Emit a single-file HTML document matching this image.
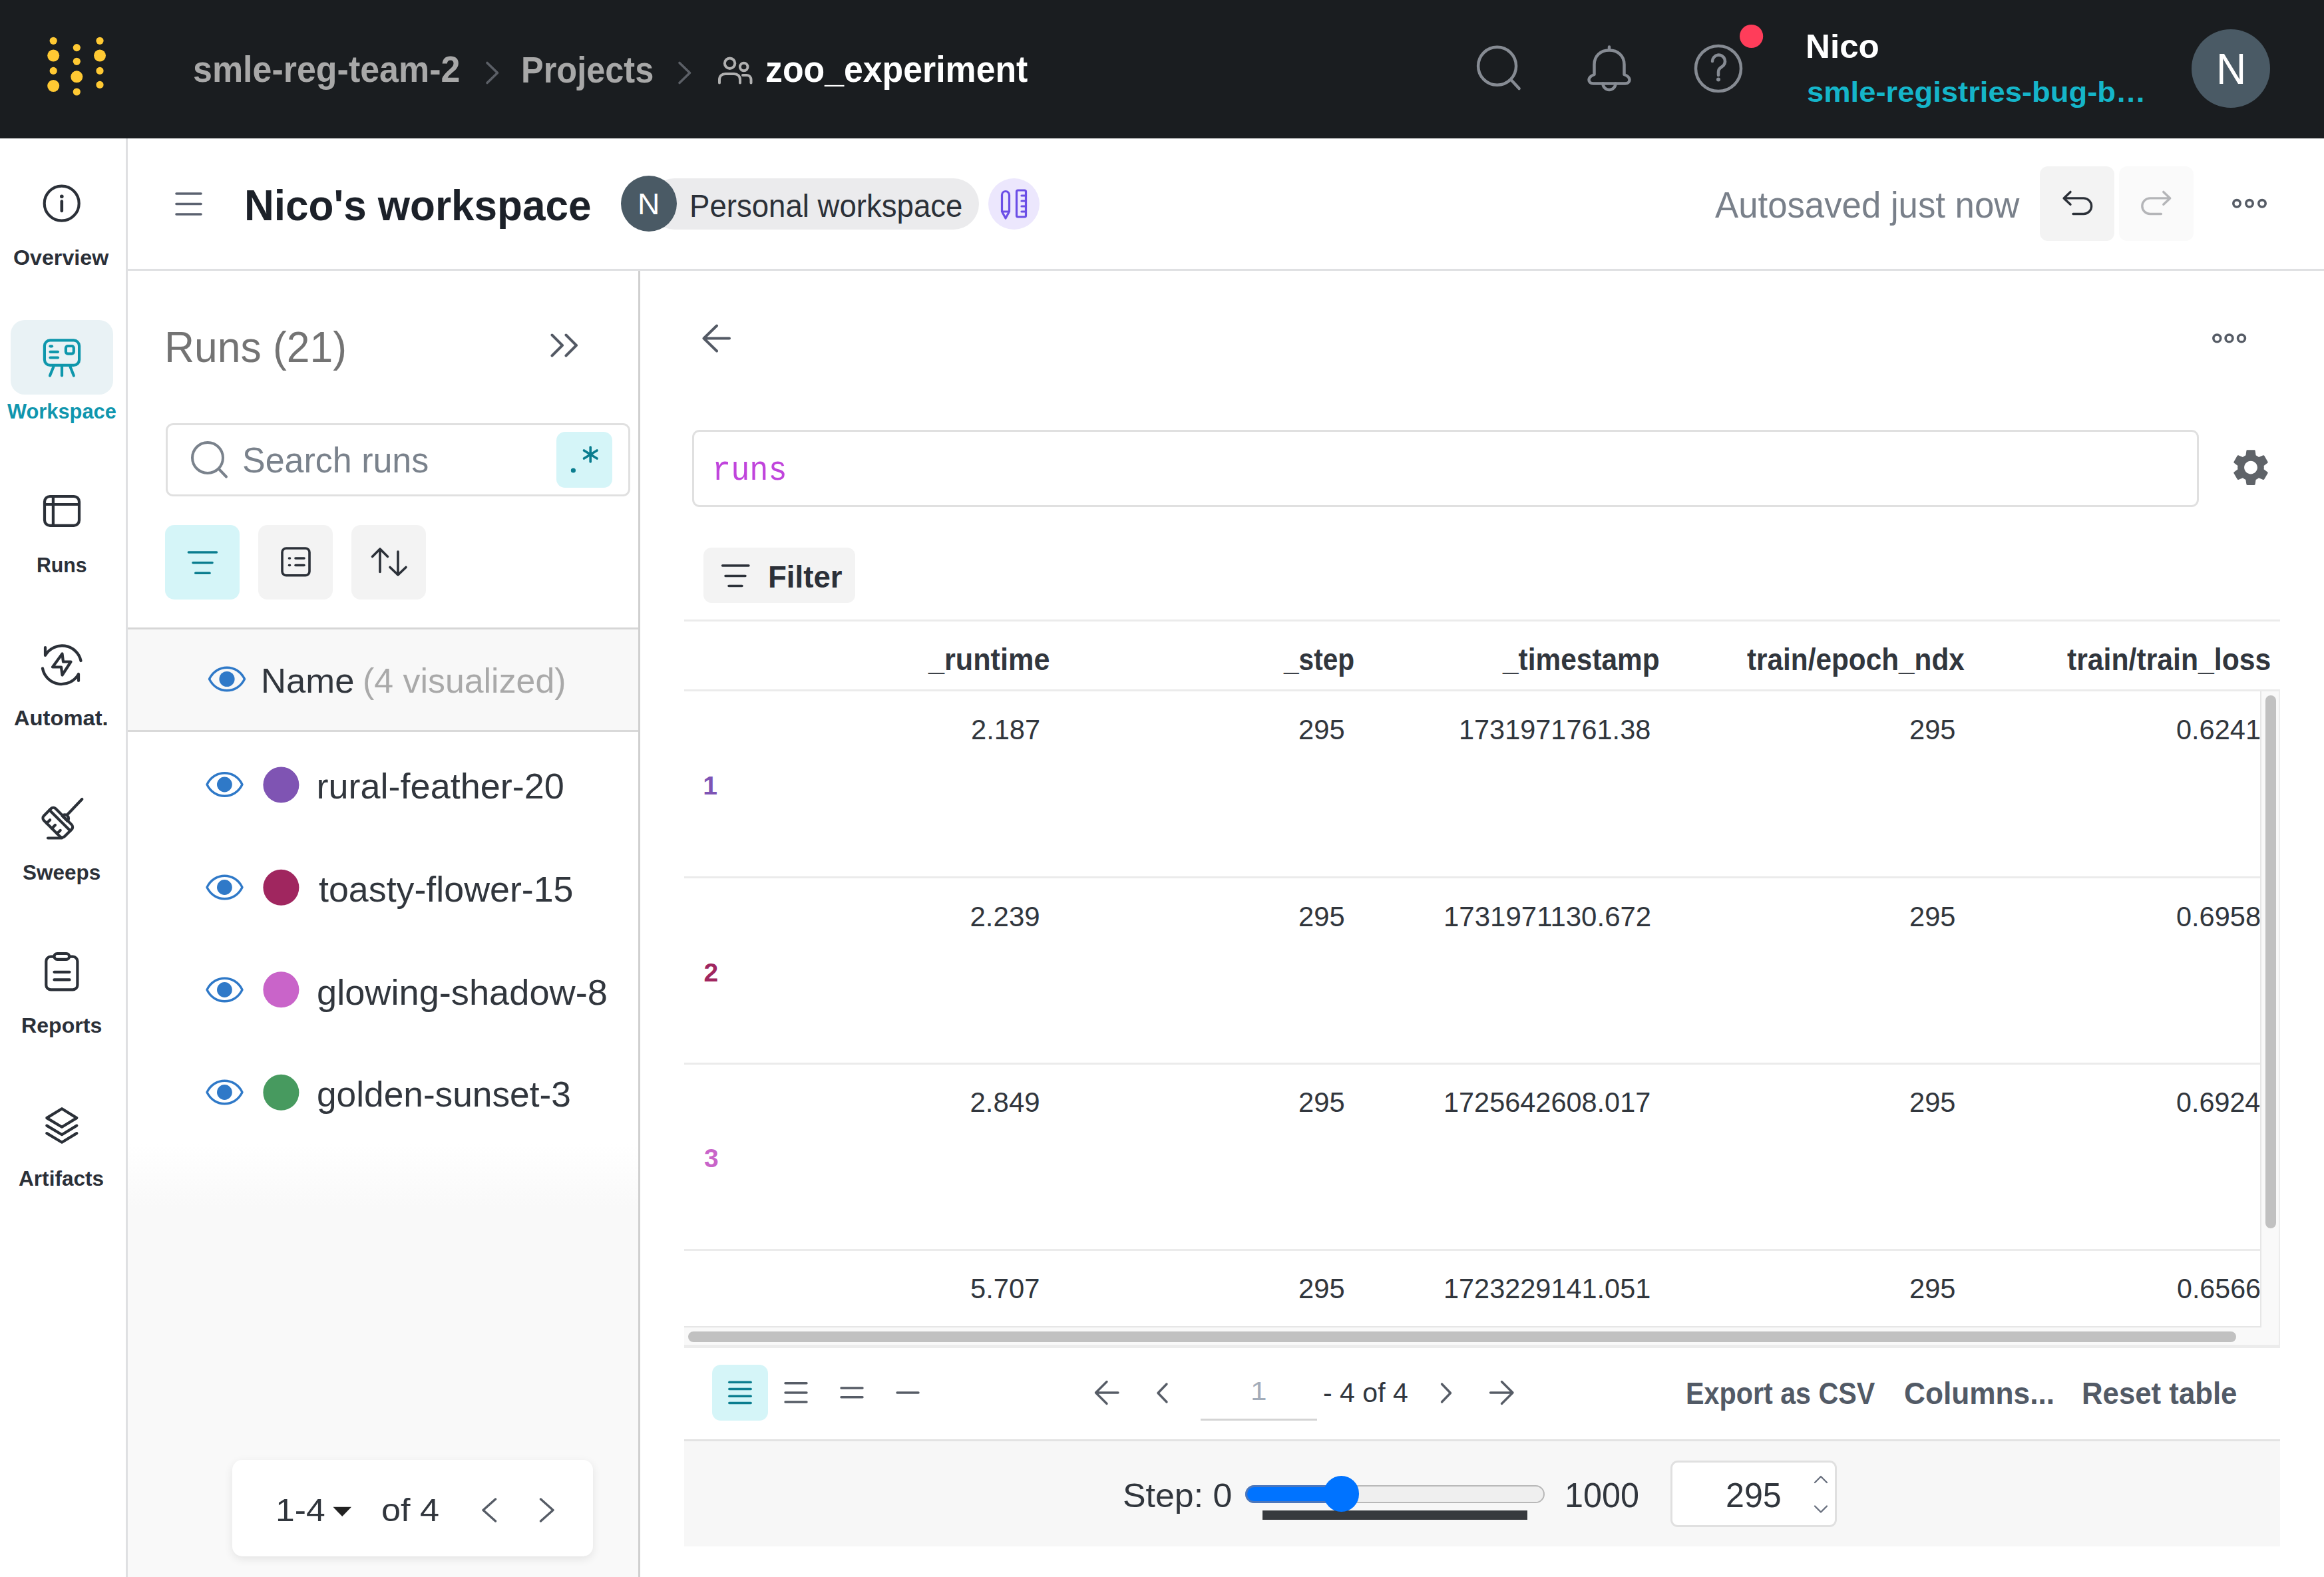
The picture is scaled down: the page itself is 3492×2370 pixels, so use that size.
<!DOCTYPE html>
<html><head><meta charset="utf-8"><title>Nico's workspace</title>
<style>
html,body{margin:0;padding:0;}
body{width:3492px;height:2370px;position:relative;overflow:hidden;background:#fff;font-family:"Liberation Sans",sans-serif;}
.b{position:absolute;box-sizing:border-box;}
.t{position:absolute;white-space:nowrap;transform-origin:0 0;}
svg{position:absolute;overflow:visible;}
</style></head><body>
<!-- top bar -->
<div class="b" style="left:0;top:0;width:3492px;height:208px;background:#1a1d20"></div>
<!-- nav sidebar -->
<div class="b" style="left:189px;top:208px;width:3px;height:2162px;background:#dfe0e2"></div>
<div class="b" style="left:16px;top:481px;width:153.5px;height:112px;border-radius:21px;background:#e9f2f5"></div>
<!-- header -->
<div class="b" style="left:192px;top:404px;width:3300px;height:3px;background:#dfe0e2"></div>
<div class="b" style="left:975px;top:268px;width:496px;height:77px;border-radius:38.5px;background:#ebebed"></div>
<div class="b" style="left:933px;top:263.5px;width:84px;height:84px;border-radius:50%;background:#4a5a65"></div>
<div class="b" style="left:1485px;top:268px;width:77px;height:77px;border-radius:50%;background:#ece7fd"></div>
<div class="b" style="left:3065px;top:250px;width:111.5px;height:112px;border-radius:12px;background:#f3f3f3"></div>
<div class="b" style="left:3184px;top:250px;width:112px;height:112px;border-radius:12px;background:#fafafa"></div>
<!-- runs panel -->
<div class="b" style="left:959px;top:407px;width:3px;height:1963px;background:#d0d0d0"></div>
<div class="b" style="left:248.5px;top:636px;width:698.5px;height:109.5px;border:3px solid #e0e0e0;border-radius:11px;background:#fff"></div>
<div class="b" style="left:836px;top:649px;width:83.5px;height:83.5px;border-radius:13px;background:#d5f5f8"></div>
<div class="b" style="left:248px;top:789px;width:112px;height:112px;border-radius:14px;background:#d5f5f8"></div>
<div class="b" style="left:388px;top:789px;width:112px;height:112px;border-radius:14px;background:#f3f3f3"></div>
<div class="b" style="left:528px;top:789px;width:112px;height:112px;border-radius:14px;background:#f3f3f3"></div>
<div class="b" style="left:192px;top:943px;width:767px;height:3px;background:#d6d6d6"></div>
<div class="b" style="left:192px;top:946px;width:767px;height:151px;background:#f8f8f8"></div>
<div class="b" style="left:192px;top:1097px;width:767px;height:3px;background:#d9d9d9"></div>
<div class="b" style="left:192px;top:1720px;width:767px;height:650px;background:linear-gradient(#fff 0px,#f9f9f9 95px,#f9f9f9 650px)"></div>
<div class="b" style="left:349px;top:2193.5px;width:542px;height:145.5px;border-radius:15px;background:#fff;box-shadow:0 4px 14px rgba(0,0,0,0.09)"></div>
<!-- main panel -->
<div class="b" style="left:1039.5px;top:645.5px;width:2264px;height:116.5px;border:3px solid #e0e0e0;border-radius:11px;background:#fff"></div>
<div class="b" style="left:1056.5px;top:822.5px;width:228.5px;height:83px;border-radius:12px;background:#f3f3f3"></div>
<div class="b" style="left:1028px;top:931px;width:2398px;height:3px;background:#ebebeb"></div>
<div class="b" style="left:1028px;top:1036px;width:2398px;height:3px;background:#ebebeb"></div>
<div class="b" style="left:1028px;top:1316.5px;width:2369px;height:3px;background:#ebebeb"></div>
<div class="b" style="left:1028px;top:1596.5px;width:2369px;height:3px;background:#ebebeb"></div>
<div class="b" style="left:1028px;top:1876.5px;width:2369px;height:3px;background:#ebebeb"></div>
<div class="b" style="left:3396px;top:1039px;width:30px;height:987px;background:#f9f9f9;border-right:2px solid #ececec"></div><div class="b" style="left:3396px;top:1039px;width:2px;height:956px;background:#e6e6e6"></div>
<div class="b" style="left:3404px;top:1045px;width:16px;height:801px;border-radius:8px;background:#c1c1c1"></div>
<div class="b" style="left:1028px;top:1993px;width:2370px;height:2px;background:#e6e6e6"></div>
<div class="b" style="left:1028px;top:1995px;width:2398px;height:31px;background:#f9f9f9;border-bottom:5px solid #ececec;border-right:2px solid #ececec"></div>
<div class="b" style="left:1034px;top:2000.5px;width:2325.5px;height:16px;border-radius:8px;background:#c1c1c1"></div>
<div class="b" style="left:1028px;top:2162.5px;width:2398px;height:3px;background:#e3e3e3"></div>
<div class="b" style="left:1028px;top:2165.5px;width:2398px;height:158px;background:#f7f7f7"></div>
<div class="b" style="left:1070px;top:2051px;width:83.6px;height:83.8px;border-radius:13px;background:#d5f5f8"></div>
<div class="b" style="left:1804px;top:2131.5px;width:175px;height:3px;background:#d4d4d4"></div>
<div class="b" style="left:1871px;top:2232px;width:449.5px;height:27px;border-radius:13.5px;background:#efefef;border:2px solid #b8b8b8"></div>
<div class="b" style="left:1871px;top:2232px;width:160px;height:27px;border-radius:13.5px;background:#0073ff;border:3px solid #4b77bd"></div>
<div class="b" style="left:1897px;top:2270px;width:398px;height:14px;background:#373a3e"></div>
<div class="b" style="left:1988.5px;top:2218.2px;width:53.6px;height:53.6px;border-radius:50%;background:#0073ff"></div>
<div class="b" style="left:2510px;top:2195px;width:250px;height:100px;border:3px solid #e0e0e0;border-radius:11px;background:#fff"></div>
<!-- icons -->
<svg width="3492" height="2370" style="left:0;top:0" fill="none" stroke-linecap="round" stroke-linejoin="round">
 <!-- logo -->
 <g fill="#ffc933">
  <circle cx="80.2" cy="61.3" r="5.6"/><circle cx="80.2" cy="83.6" r="9"/><circle cx="80.2" cy="106.4" r="5.6"/><circle cx="80.2" cy="129.1" r="9"/>
  <circle cx="115.3" cy="71.6" r="5.6"/><circle cx="115.3" cy="92.3" r="5.6"/><circle cx="115.3" cy="115.3" r="9"/><circle cx="115.3" cy="138" r="5.6"/>
  <circle cx="150" cy="61.3" r="5.6"/><circle cx="150" cy="83.6" r="9"/><circle cx="150" cy="106.4" r="5.6"/><circle cx="150" cy="127.4" r="5.6"/>
 </g>
 <!-- breadcrumb chevrons -->
 <g stroke="#5b5f66" stroke-width="3.6">
  <polyline points="732,94.5 747.5,109.5 732,124.5"/>
  <polyline points="1021,94.5 1036.5,109.5 1021,124.5"/>
 </g>
 <!-- people -->
 <g stroke="#b0b0b0" stroke-width="4">
  <circle cx="1096.6" cy="95.2" r="7.7"/>
  <path d="M1081,124.5 V120 C1081,114 1085,111 1090,111 H1103 C1108,111 1112,114 1112,120 V124.5"/>
  <circle cx="1117.7" cy="100.5" r="5.8"/>
  <path d="M1116,113 H1122 C1126,113 1128.5,116 1128.5,120 V124.5"/>
 </g>
 <!-- top right icons -->
 <g stroke="#868b93" stroke-width="4.5">
  <circle cx="2249.6" cy="99.3" r="28.5"/>
  <line x1="2271" y1="120.5" x2="2282.6" y2="133"/>
  <path d="M2395.5,112 V97 C2395.5,84 2405,75.5 2418,75.5 C2431,75.5 2440.5,84 2440.5,97 V112 C2446,114 2448.5,117 2448.5,120 C2448.5,123 2446,125.5 2442,125.5 H2394 C2390,125.5 2387.5,123 2387.5,120 C2387.5,117 2390,114 2395.5,112 Z"/>
  <line x1="2418" y1="70.5" x2="2418" y2="74"/>
  <path d="M2408.5,125.5 a9.5,9.5 0 0 0 19,0"/>
  <circle cx="2582" cy="103" r="34"/>
  <path d="M2573,92 a9.5,9.5 0 1 1 14,8.5 c-3,1.8 -5,3.5 -5,7.5 v5"/>
 </g>
 <circle cx="2582" cy="119.5" r="3" fill="#868b93"/>
 <circle cx="2631.6" cy="54.5" r="17.6" fill="#ff3d5a"/>
 <circle cx="3352" cy="103" r="59" fill="#4a5a65"/>
 <!-- nav icons -->
 <g stroke="#2b3038" stroke-width="4.2">
  <circle cx="92.7" cy="305.7" r="26"/>
  <line x1="92.8" y1="302.5" x2="92.8" y2="317" stroke-width="4.6"/>
  <rect x="67" y="746" width="52" height="43.8" rx="8"/>
  <line x1="67" y1="758" x2="119" y2="758"/>
  <line x1="79.9" y1="746" x2="79.9" y2="789.8"/>
  <path d="M68,973 V985 A29,29 0 0 1 121.5,993"/>
  <path d="M64,1004.5 A29,29 0 0 0 118,1013 V1023"/>
  <path d="M93.5,982.5 L95,994.5 H106.5 L93.5,1014.5 L92,1002.5 H79 Z"/>
  <path d="M123.3,1201 L100.5,1225"/>
  <g transform="rotate(45 87.5 1235.5)"><rect x="65.5" y="1224" width="44" height="25" rx="5"/><line x1="65.5" y1="1232" x2="109.5" y2="1232"/><line x1="76.5" y1="1249" x2="76.5" y2="1242"/><line x1="87.5" y1="1249" x2="87.5" y2="1242"/><line x1="98.5" y1="1249" x2="98.5" y2="1242"/></g>
  <path d="M93.5,1225.9 A5.66,5.66 0 0 1 101.5,1233.9 Z"/>
  <line x1="72" y1="1259.5" x2="93" y2="1259.5"/>
  <rect x="69.3" y="1437.6" width="47.1" height="49.8" rx="7"/>
  <rect x="81.5" y="1433" width="22.6" height="8.8" rx="4.4" fill="#fff"/>
  <line x1="81.5" y1="1460.8" x2="104.5" y2="1460.8"/>
  <line x1="81.5" y1="1472.4" x2="104.5" y2="1472.4"/>
  <path d="M93,1666.2 L115.3,1680.1 L93,1693.7 L70.3,1680.1 Z"/>
  <path d="M70.3,1691.6 L93,1705.2 L115.3,1691.6"/>
  <path d="M70.3,1703.1 L93,1716.7 L115.3,1703.1"/>
 </g>
 <circle cx="92.8" cy="295.3" r="2.8" fill="#2b3038"/>
 <g stroke="#0e97ac" stroke-width="4.2">
  <rect x="66.9" y="511.4" width="52.2" height="37.5" rx="8.4"/>
  <line x1="75.5" y1="520.3" x2="78" y2="520.3"/>
  <line x1="75.5" y1="528.8" x2="87" y2="528.8"/>
  <line x1="75.5" y1="537.5" x2="87" y2="537.5"/>
  <rect x="98.9" y="520" width="11.9" height="11.6" rx="3"/>
  <line x1="80.5" y1="551" x2="75" y2="564.5"/>
  <line x1="93" y1="551" x2="93" y2="564.5"/>
  <line x1="105.5" y1="551" x2="110.8" y2="564.5"/>
 </g>
 <!-- header icons -->
 <g stroke="#5b6270" stroke-width="3.6">
  <line x1="265" y1="291" x2="302" y2="291"/>
  <line x1="265" y1="306.5" x2="302" y2="306.5"/>
  <line x1="265" y1="322" x2="302" y2="322"/>
 </g>
 <g stroke="#6b4ee6" stroke-width="3.2">
  <path d="M1505.5,318 V293 a5.5,5.5 0 0 1 11,0 V318 L1511,328 Z M1505.5,318 H1516.5"/>
  <rect x="1527.5" y="286" width="14" height="40" rx="2"/>
  <line x1="1535" y1="294" x2="1541" y2="294"/><line x1="1535" y1="302" x2="1541" y2="302"/><line x1="1535" y1="310" x2="1541" y2="310"/><line x1="1535" y1="318" x2="1541" y2="318"/>
 </g>
 <path d="M3111,288.4 L3101.1,297.9 L3111,307.3 M3101.1,297.9 H3130.8 a11.8,11.8 0 0 1 0,23.6 H3115" stroke="#2b3038" stroke-width="3.4"/>
 <path d="M3250.8,288.4 L3260.7,297.9 L3250.8,307.3 M3260.7,297.9 H3230.6 a11.8,11.8 0 0 0 0,23.6 H3247.4" stroke="#b4b5b8" stroke-width="3.4"/>
 <g stroke="#565c66" stroke-width="3.6">
  <circle cx="3361" cy="305.8" r="5.2"/><circle cx="3380" cy="305.8" r="5.2"/><circle cx="3399" cy="305.8" r="5.2"/>
 </g>
 <!-- runs panel icons -->
 <g stroke="#535964" stroke-width="4">
  <polyline points="829.5,503.5 845,519 829.5,534.5"/>
  <polyline points="850.5,503.5 866,519 850.5,534.5"/>
 </g>
 <g stroke="#7a828c" stroke-width="4">
  <circle cx="312" cy="688" r="23"/>
  <line x1="329" y1="705" x2="340" y2="716.5"/>
 </g>
 <circle cx="861.4" cy="707" r="3.6" fill="#0a7d8f"/>
 <g stroke="#0a7d8f" stroke-width="3.6">
  <line x1="887.2" y1="672" x2="887.2" y2="694"/>
  <line x1="877.5" y1="677" x2="897" y2="689"/>
  <line x1="897" y1="677" x2="877.5" y2="689"/>
 </g>
 <g stroke="#0a7d8f" stroke-width="3.6">
  <line x1="283.4" y1="830" x2="325.4" y2="830"/>
  <line x1="290" y1="845.8" x2="319" y2="845.8"/>
  <line x1="293.8" y1="861.3" x2="315" y2="861.3"/>
 </g>
 <g stroke="#2b3038" stroke-width="3.6">
  <rect x="424" y="824" width="41" height="40.7" rx="6"/>
  <line x1="434.5" y1="839" x2="435.5" y2="839"/><line x1="444" y1="839" x2="457" y2="839"/>
  <line x1="434.5" y1="849.5" x2="435.5" y2="849.5"/><line x1="444" y1="849.5" x2="457" y2="849.5"/>
  <path d="M571,859.5 V825 M559.5,836.5 L571,825 L582.5,836.5"/>
  <path d="M598,829 V864 M586,852.5 L598,864 L610,852.5"/>
 </g>
 <g stroke="#2f79c8" stroke-width="3.4">
  <path d="M314.5,1020.5 C325.5,997.5 356.5,997.5 367.5,1020.5 C356.5,1043.5 325.5,1043.5 314.5,1020.5 Z"/>
  <path d="M311,1179 C322,1156 353,1156 364,1179 C353,1202 322,1202 311,1179 Z"/>
  <path d="M311,1333.5 C322,1310.5 353,1310.5 364,1333.5 C353,1356.5 322,1356.5 311,1333.5 Z"/>
  <path d="M311,1487.5 C322,1464.5 353,1464.5 364,1487.5 C353,1510.5 322,1510.5 311,1487.5 Z"/>
  <path d="M311,1641.5 C322,1618.5 353,1618.5 364,1641.5 C353,1664.5 322,1664.5 311,1641.5 Z"/>
 </g>
 <g fill="#2f79c8">
  <circle cx="341" cy="1020.5" r="11.6"/>
  <circle cx="337.4" cy="1179" r="11.4"/><circle cx="337.4" cy="1333.5" r="11.4"/><circle cx="337.4" cy="1487.5" r="11.4"/><circle cx="337.4" cy="1641.5" r="11.4"/>
 </g>
 <circle cx="422.4" cy="1179.5" r="27" fill="#7f54b3"/>
 <circle cx="422.4" cy="1333.8" r="27" fill="#a0265f"/>
 <circle cx="422.4" cy="1487.3" r="27" fill="#c964c9"/>
 <circle cx="422.4" cy="1641.8" r="27" fill="#479a5f"/>
 <path d="M500.5,2264.8 H528 L514.2,2279 Z" fill="#222" />
 <g stroke="#565c66" stroke-width="3.4">
  <polyline points="744.5,2253 726,2269.5 744.5,2286"/>
  <polyline points="812.5,2253 831,2269.5 812.5,2286"/>
 </g>
 <!-- main panel icons -->
 <g stroke="#535964" stroke-width="4">
  <path d="M1077,489.5 L1057.5,508.5 L1077,527.5 M1057.5,508.5 H1096"/>
 </g>
 <g stroke="#565c66" stroke-width="3.6">
  <circle cx="3331.3" cy="508.4" r="5.4"/><circle cx="3349.5" cy="508.4" r="5.4"/><circle cx="3368" cy="508.4" r="5.4"/>
 </g>
 <g stroke="#2b3038" stroke-width="3.4">
  <line x1="1085.5" y1="850" x2="1125" y2="850"/>
  <line x1="1090" y1="865.5" x2="1120" y2="865.5"/>
  <line x1="1095" y1="880.5" x2="1115" y2="880.5"/>
 </g>
 <!-- density icons -->
 <g stroke="#0a7d8f" stroke-width="3.4">
  <line x1="1095.8" y1="2077.3" x2="1128.2" y2="2077.3"/><line x1="1095.8" y1="2087.5" x2="1128.2" y2="2087.5"/><line x1="1095.8" y1="2098.2" x2="1128.2" y2="2098.2"/><line x1="1095.8" y1="2108.5" x2="1128.2" y2="2108.5"/>
 </g>
 <g stroke="#565c66" stroke-width="3.4">
  <line x1="1180" y1="2078.8" x2="1212" y2="2078.8"/><line x1="1180" y1="2093" x2="1212" y2="2093"/><line x1="1180" y1="2107" x2="1212" y2="2107"/>
  <line x1="1264" y1="2086" x2="1296" y2="2086"/><line x1="1264" y1="2099.7" x2="1296" y2="2099.7"/>
  <line x1="1348" y1="2093" x2="1380" y2="2093"/>
  <path d="M1663,2076.5 L1646.5,2093 L1663,2109.5 M1646.5,2093 H1680"/>
  <polyline points="1753,2080 1740,2093.5 1753,2107"/>
  <polyline points="2166.5,2080 2179.5,2093.5 2166.5,2107"/>
  <path d="M2256.5,2076.5 L2273,2093 L2256.5,2109.5 M2273,2093 H2239.5"/>

 </g>
 <g stroke="#6b7280" stroke-width="2.4">
  <polyline points="2727,2228 2736,2219 2745,2228"/>
  <polyline points="2727,2263.5 2736,2272.5 2745,2263.5"/>
 </g>
 <!-- gear -->
 <path fill="#5f6368" transform="translate(3349,669.6) scale(2.75)" d="M19.14,12.94c0.04-0.3,0.06-0.61,0.06-0.94c0-0.32-0.02-0.64-0.07-0.94l2.03-1.58c0.18-0.14,0.23-0.41,0.12-0.61 l-1.92-3.32c-0.12-0.22-0.37-0.29-0.59-0.22l-2.39,0.96c-0.5-0.38-1.03-0.7-1.62-0.94L14.4,2.81c-0.04-0.24-0.24-0.41-0.48-0.41 h-3.84c-0.24,0-0.43,0.17-0.47,0.41L9.25,5.35C8.66,5.59,8.12,5.92,7.63,6.29L5.24,5.33c-0.22-0.08-0.47,0-0.59,0.22L2.74,8.87 C2.62,9.08,2.66,9.34,2.86,9.48l2.03,1.58C4.84,11.36,4.8,11.69,4.8,12s0.02,0.64,0.07,0.94l-2.03,1.58 c-0.18,0.14-0.23,0.41-0.12,0.61l1.92,3.32c0.12,0.22,0.37,0.29,0.59,0.22l2.39-0.96c0.5,0.38,1.03,0.7,1.62,0.94l0.36,2.54 c0.05,0.24,0.24,0.41,0.48,0.41h3.84c0.24,0,0.44-0.17,0.47-0.41l0.36-2.54c0.59-0.24,1.13-0.56,1.62-0.94l2.39,0.96 c0.22,0.08,0.47,0,0.59-0.22l1.92-3.32c0.12-0.22,0.07-0.47-0.12-0.61L19.14,12.94z M12,15.6c-1.98,0-3.6-1.62-3.6-3.6 s1.62-3.6,3.6-3.6s3.6,1.62,3.6,3.6S13.98,15.6,12,15.6z"/>
</svg>

<div class="t" style="left:289.9px;top:77.4px;font-size:55px;line-height:55px;font-weight:bold;color:#a8a8a8;font-family:'Liberation Sans';transform:scaleX(0.9448);">smle-reg-team-2</div>
<div class="t" style="left:782.8px;top:77.9px;font-size:55px;line-height:55px;font-weight:bold;color:#a8a8a8;font-family:'Liberation Sans';transform:scaleX(0.9178);">Projects</div>
<div class="t" style="left:1150.4px;top:76.9px;font-size:55px;line-height:55px;font-weight:bold;color:#ffffff;font-family:'Liberation Sans';transform:scaleX(0.9418);">zoo_experiment</div>
<div class="t" style="left:2712.8px;top:45.2px;font-size:50px;line-height:50px;font-weight:bold;color:#ffffff;font-family:'Liberation Sans';transform:scaleX(1.0233);">Nico</div>
<div class="t" style="left:2714.6px;top:117.2px;font-size:43px;line-height:43px;font-weight:bold;color:#15b5c9;font-family:'Liberation Sans';transform:scaleX(1.0554);">smle-registries-bug-b…</div>
<div class="t" style="left:3330.1px;top:72.4px;font-size:64.5px;line-height:64.5px;font-weight:normal;color:#ffffff;font-family:'Liberation Sans';transform:scaleX(0.9702);">N</div>
<div class="t" style="left:367.1px;top:275.5px;font-size:65.5px;line-height:65.5px;font-weight:bold;color:#1c2129;font-family:'Liberation Sans';transform:scaleX(0.9468);">Nico's workspace</div>
<div class="t" style="left:958.4px;top:283.9px;font-size:45px;line-height:45px;font-weight:normal;color:#ffffff;font-family:'Liberation Sans';transform:scaleX(1.0272);">N</div>
<div class="t" style="left:1036.4px;top:284.9px;font-size:49px;line-height:49px;font-weight:normal;color:#2b3038;font-family:'Liberation Sans';transform:scaleX(0.9302);">Personal workspace</div>
<div class="t" style="left:2577.0px;top:279.6px;font-size:56px;line-height:56px;font-weight:normal;color:#79808a;font-family:'Liberation Sans';transform:scaleX(0.9418);">Autosaved just now</div>
<div class="t" style="left:20.3px;top:370.8px;font-size:32px;line-height:32px;font-weight:bold;color:#2b3038;font-family:'Liberation Sans';transform:scaleX(1.0062);">Overview</div>
<div class="t" style="left:10.5px;top:601.9px;font-size:32px;line-height:32px;font-weight:bold;color:#1096ae;font-family:'Liberation Sans';transform:scaleX(0.9630);">Workspace</div>
<div class="t" style="left:54.6px;top:832.6px;font-size:32px;line-height:32px;font-weight:bold;color:#2b3038;font-family:'Liberation Sans';transform:scaleX(0.9452);">Runs</div>
<div class="t" style="left:21.3px;top:1063.4px;font-size:32px;line-height:32px;font-weight:bold;color:#2b3038;font-family:'Liberation Sans';transform:scaleX(1.0215);">Automat.</div>
<div class="t" style="left:34.1px;top:1294.6px;font-size:32px;line-height:32px;font-weight:bold;color:#2b3038;font-family:'Liberation Sans';transform:scaleX(0.9832);">Sweeps</div>
<div class="t" style="left:31.7px;top:1524.9px;font-size:32px;line-height:32px;font-weight:bold;color:#2b3038;font-family:'Liberation Sans';transform:scaleX(1.0033);">Reports</div>
<div class="t" style="left:28.3px;top:1754.9px;font-size:32px;line-height:32px;font-weight:bold;color:#2b3038;font-family:'Liberation Sans';transform:scaleX(0.9874);">Artifacts</div>
<div class="t" style="left:247.1px;top:488.5px;font-size:65.5px;line-height:65.5px;font-weight:normal;color:#737373;font-family:'Liberation Sans';transform:scaleX(0.9531);">Runs (21)</div>
<div class="t" style="left:364.4px;top:664.6px;font-size:54.5px;line-height:54.5px;font-weight:normal;color:#7a828c;font-family:'Liberation Sans';transform:scaleX(0.9537);">Search runs</div>
<div class="t" style="left:392.4px;top:998.0px;font-size:51.7px;line-height:51.7px;font-weight:normal;color:#31363d;font-family:'Liberation Sans';transform:scaleX(1.0184);">Name</div>
<div class="t" style="left:545.1px;top:998.0px;font-size:51.7px;line-height:51.7px;font-weight:normal;color:#a9a9a9;font-family:'Liberation Sans';transform:scaleX(1.0034);">(4 visualized)</div>
<div class="t" style="left:475.6px;top:1153.9px;font-size:54px;line-height:54px;font-weight:normal;color:#31363d;font-family:'Liberation Sans';">rural-feather-20</div>
<div class="t" style="left:479.4px;top:1308.9px;font-size:54px;line-height:54px;font-weight:normal;color:#31363d;font-family:'Liberation Sans';transform:scaleX(0.9957);">toasty-flower-15</div>
<div class="t" style="left:476.3px;top:1463.8px;font-size:54px;line-height:54px;font-weight:normal;color:#31363d;font-family:'Liberation Sans';transform:scaleX(1.0038);">glowing-shadow-8</div>
<div class="t" style="left:476.3px;top:1617.0px;font-size:54px;line-height:54px;font-weight:normal;color:#31363d;font-family:'Liberation Sans';transform:scaleX(0.9860);">golden-sunset-3</div>
<div class="t" style="left:414.4px;top:2245.8px;font-size:47.5px;line-height:47.5px;font-weight:normal;color:#31363d;font-family:'Liberation Sans';transform:scaleX(1.0868);">1-4</div>
<div class="t" style="left:572.9px;top:2245.8px;font-size:47.5px;line-height:47.5px;font-weight:normal;color:#31363d;font-family:'Liberation Sans';transform:scaleX(1.0998);">of 4</div>
<div class="t" style="left:1069.6px;top:682.1px;font-size:52px;line-height:52px;font-weight:normal;color:#c044dc;font-family:'Liberation Mono';transform:scaleX(0.9026);">runs</div>
<div class="t" style="left:1154.1px;top:842.8px;font-size:47px;line-height:47px;font-weight:bold;color:#2b3038;font-family:'Liberation Sans';transform:scaleX(0.9703);">Filter</div>
<div class="t" style="left:1394.7px;top:968.1px;font-size:46px;line-height:46px;font-weight:bold;color:#31363d;font-family:'Liberation Sans';transform:scaleX(0.9389);">_runtime</div>
<div class="t" style="left:1929.1px;top:968.1px;font-size:46px;line-height:46px;font-weight:bold;color:#31363d;font-family:'Liberation Sans';transform:scaleX(0.8837);">_step</div>
<div class="t" style="left:2257.7px;top:968.1px;font-size:46px;line-height:46px;font-weight:bold;color:#31363d;font-family:'Liberation Sans';transform:scaleX(0.9221);">_timestamp</div>
<div class="t" style="left:2624.7px;top:968.1px;font-size:46px;line-height:46px;font-weight:bold;color:#31363d;font-family:'Liberation Sans';transform:scaleX(0.9199);">train/epoch_ndx</div>
<div class="t" style="left:3106.0px;top:968.1px;font-size:46px;line-height:46px;font-weight:bold;color:#31363d;font-family:'Liberation Sans';transform:scaleX(0.9289);">train/train_loss</div>
<div class="t" style="left:1458.5px;top:1075.8px;font-size:42px;line-height:42px;font-weight:normal;color:#31363d;font-family:'Liberation Sans';transform:scaleX(0.9908);">2.187</div>
<div class="t" style="left:1951.0px;top:1075.8px;font-size:42px;line-height:42px;font-weight:normal;color:#31363d;font-family:'Liberation Sans';transform:scaleX(0.9939);">295</div>
<div class="t" style="left:2192.0px;top:1075.8px;font-size:42px;line-height:42px;font-weight:normal;color:#31363d;font-family:'Liberation Sans';transform:scaleX(0.9873);">1731971761.38</div>
<div class="t" style="left:2869.0px;top:1075.8px;font-size:42px;line-height:42px;font-weight:normal;color:#31363d;font-family:'Liberation Sans';transform:scaleX(0.9909);">295</div>
<div class="t" style="left:3269.7px;top:1075.8px;font-size:42px;line-height:42px;font-weight:normal;color:#31363d;font-family:'Liberation Sans';transform:scaleX(0.9885);">0.6241</div>
<div class="t" style="left:1056.2px;top:1160.7px;font-size:39px;line-height:39px;font-weight:bold;color:#7e54b4;font-family:'Liberation Sans';">1</div>
<div class="t" style="left:1457.5px;top:1356.8px;font-size:42px;line-height:42px;font-weight:normal;color:#31363d;font-family:'Liberation Sans';">2.239</div>
<div class="t" style="left:1951.0px;top:1356.8px;font-size:42px;line-height:42px;font-weight:normal;color:#31363d;font-family:'Liberation Sans';transform:scaleX(0.9939);">295</div>
<div class="t" style="left:2169.0px;top:1356.8px;font-size:42px;line-height:42px;font-weight:normal;color:#31363d;font-family:'Liberation Sans';">1731971130.672</div>
<div class="t" style="left:2869.0px;top:1356.8px;font-size:42px;line-height:42px;font-weight:normal;color:#31363d;font-family:'Liberation Sans';transform:scaleX(0.9909);">295</div>
<div class="t" style="left:3269.7px;top:1356.8px;font-size:42px;line-height:42px;font-weight:normal;color:#31363d;font-family:'Liberation Sans';transform:scaleX(0.9885);">0.6958</div>
<div class="t" style="left:1057.4px;top:1441.7px;font-size:39px;line-height:39px;font-weight:bold;color:#a0265f;font-family:'Liberation Sans';">2</div>
<div class="t" style="left:1457.5px;top:1635.9px;font-size:42px;line-height:42px;font-weight:normal;color:#31363d;font-family:'Liberation Sans';">2.849</div>
<div class="t" style="left:1951.0px;top:1635.9px;font-size:42px;line-height:42px;font-weight:normal;color:#31363d;font-family:'Liberation Sans';transform:scaleX(0.9939);">295</div>
<div class="t" style="left:2169.0px;top:1635.9px;font-size:42px;line-height:42px;font-weight:normal;color:#31363d;font-family:'Liberation Sans';transform:scaleX(0.9871);">1725642608.017</div>
<div class="t" style="left:2869.0px;top:1635.9px;font-size:42px;line-height:42px;font-weight:normal;color:#31363d;font-family:'Liberation Sans';transform:scaleX(0.9909);">295</div>
<div class="t" style="left:3269.7px;top:1635.9px;font-size:42px;line-height:42px;font-weight:normal;color:#31363d;font-family:'Liberation Sans';transform:scaleX(0.9833);">0.6924</div>
<div class="t" style="left:1058.0px;top:1720.8px;font-size:39px;line-height:39px;font-weight:bold;color:#c964c9;font-family:'Liberation Sans';">3</div>
<div class="t" style="left:1458.2px;top:1915.9px;font-size:42px;line-height:42px;font-weight:normal;color:#31363d;font-family:'Liberation Sans';transform:scaleX(0.9942);">5.707</div>
<div class="t" style="left:1951.0px;top:1915.9px;font-size:42px;line-height:42px;font-weight:normal;color:#31363d;font-family:'Liberation Sans';transform:scaleX(0.9939);">295</div>
<div class="t" style="left:2169.0px;top:1915.9px;font-size:42px;line-height:42px;font-weight:normal;color:#31363d;font-family:'Liberation Sans';transform:scaleX(0.9871);">1723229141.051</div>
<div class="t" style="left:2869.0px;top:1915.9px;font-size:42px;line-height:42px;font-weight:normal;color:#31363d;font-family:'Liberation Sans';transform:scaleX(0.9909);">295</div>
<div class="t" style="left:3270.7px;top:1915.9px;font-size:42px;line-height:42px;font-weight:normal;color:#31363d;font-family:'Liberation Sans';transform:scaleX(0.9805);">0.6566</div>
<div class="t" style="left:1878.7px;top:2072.3px;font-size:38px;line-height:38px;font-weight:normal;color:#a3acb9;font-family:'Liberation Sans';transform:scaleX(1.1615);">1</div>
<div class="t" style="left:1987.7px;top:2073.1px;font-size:40px;line-height:40px;font-weight:normal;color:#31363d;font-family:'Liberation Sans';transform:scaleX(1.0265);">- 4 of 4</div>
<div class="t" style="left:2533.4px;top:2071.1px;font-size:46px;line-height:46px;font-weight:bold;color:#525a66;font-family:'Liberation Sans';transform:scaleX(0.8971);">Export as CSV</div>
<div class="t" style="left:2861.2px;top:2071.1px;font-size:46px;line-height:46px;font-weight:bold;color:#525a66;font-family:'Liberation Sans';transform:scaleX(0.9616);">Columns...</div>
<div class="t" style="left:3128.3px;top:2071.1px;font-size:46px;line-height:46px;font-weight:bold;color:#525a66;font-family:'Liberation Sans';transform:scaleX(0.9511);">Reset table</div>
<div class="t" style="left:1687.0px;top:2222.5px;font-size:50px;line-height:50px;font-weight:normal;color:#31363d;font-family:'Liberation Sans';transform:scaleX(1.0370);">Step: 0</div>
<div class="t" style="left:2350.9px;top:2221.8px;font-size:51px;line-height:51px;font-weight:normal;color:#31363d;font-family:'Liberation Sans';transform:scaleX(0.9872);">1000</div>
<div class="t" style="left:2592.6px;top:2221.8px;font-size:51px;line-height:51px;font-weight:normal;color:#31363d;font-family:'Liberation Sans';transform:scaleX(0.9847);">295</div>
</body></html>
